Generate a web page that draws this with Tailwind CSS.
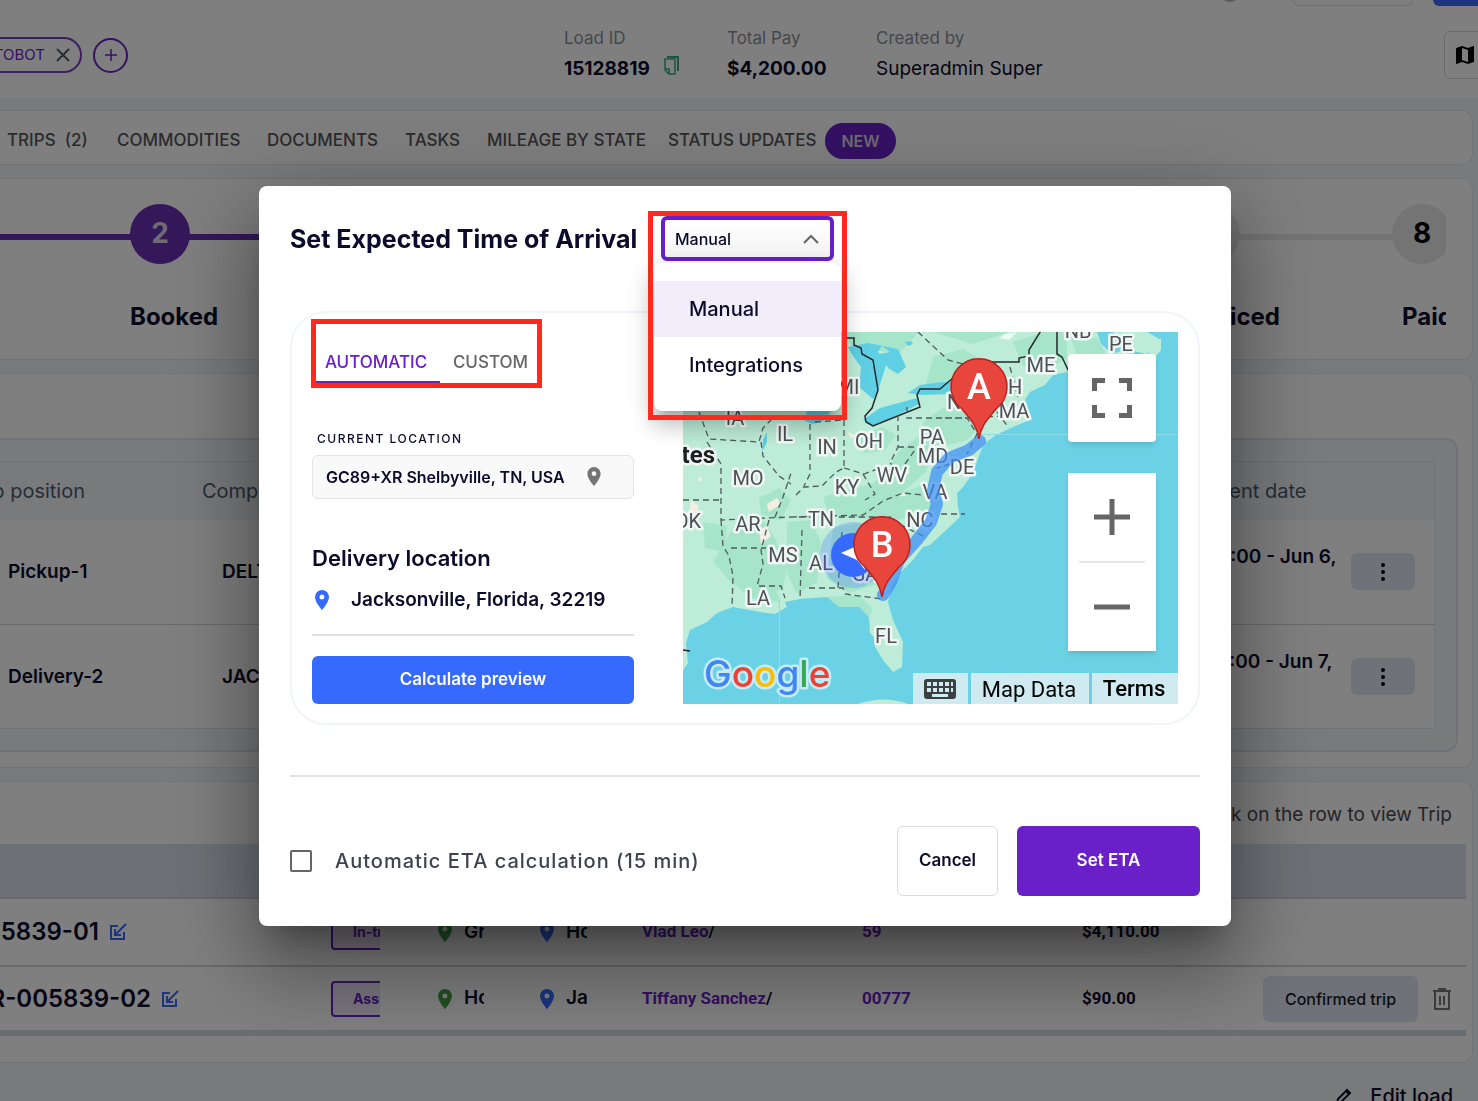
<!DOCTYPE html>
<html lang="en">
<head>
  <meta charset="UTF-8">
  <meta name="viewport" content="width=device-width, initial-scale=1.0">
  <script src="https://cdn.jsdelivr.net/npm/@tailwindcss/browser@4"></script>
  <title>Load 15128819</title>
</head>
<body class="font-['Inter','Liberation_Sans',sans-serif] text-[#0b0b2b]">

  <!-- shared icon shapes -->
  <svg class="hidden">
    <symbol id="pin" viewBox="0 0 14 20">
      <path fill="currentColor" fill-rule="evenodd" d="M7 0a7 7 0 0 0-7 7c0 5.200 7 13 7 13s7-7.800 7-13a7 7 0 0 0-7-7zm0 9.500a2.500 2.500 0 1 1 0-5 2.500 2.500 0 0 1 0 5z"/>
    </symbol>
    <symbol id="edit" viewBox="0 0 18 18">
      <path fill="none" stroke="currentColor" stroke-width="2" d="M9 3H2v13h13V9M17 1 7 11M6 6v6h6"/>
    </symbol>
    <symbol id="dots" viewBox="0 0 4 20">
      <g fill="currentColor"><circle cx="2" cy="3" r="2"/><circle cx="2" cy="10" r="2"/><circle cx="2" cy="17" r="2"/></g>
    </symbol>
  </svg>

  <div class="h-screen overflow-hidden bg-[#f1f5f9]">

    <header class="relative flex h-[98px] items-start bg-white">
      <div class="mt-[37px] flex w-[564px] shrink-0 items-center gap-[11px]">
        <div class="flex w-[82px] justify-end overflow-hidden">
          <span class="flex h-9 shrink-0 items-center gap-[11px] rounded-full border-2 border-[#7a3fc4] pr-[10px] pl-4 text-[15px] text-[#6a20c8]">
            ROTOBOT
            <svg class="size-[14px]" viewBox="0 0 14 14" fill="none" stroke="#555c66" stroke-width="2"><path d="M1 1l12 12M13 1 1 13"/></svg>
          </span>
        </div>
        <button type="button" aria-label="Add tag" class="flex size-[35px] items-center justify-center rounded-full border-2 border-[#6a20c8] text-[#6a20c8]">
          <svg class="size-3" viewBox="0 0 12 12" stroke="currentColor" stroke-width="1.500"><path d="M6 0v12M0 6h12"/></svg>
        </button>
      </div>
      <dl class="mt-[25px] flex text-[19px] leading-[26px]">
        <div class="w-[163px]">
          <dt class="text-[17px] leading-[26px] text-[#8a8f98]">Load ID</dt>
          <dd class="mt-[5px] flex gap-[14px] font-bold">15128819
            <svg class="h-[19px] w-[15px]" viewBox="0 0 15 19" fill="none" stroke="#2fae85"><path stroke-width="1.500" d="M1 3h10v15H5l-4-4V3zM1 13h4v5"/><path stroke-width="2" d="M3 1h11v14"/></svg>
          </dd>
        </div>
        <div class="w-[149px]">
          <dt class="text-[17px] leading-[26px] text-[#8a8f98]">Total Pay</dt>
          <dd class="mt-[5px] font-bold">$4,200.00</dd>
        </div>
        <div>
          <dt class="text-[17px] leading-[26px] text-[#8a8f98]">Created by</dt>
          <dd class="mt-[5px]">Superadmin Super</dd>
        </div>
      </dl>
      <div class="absolute top-0 right-0 flex">
        <span class="-mt-5 mr-[52px] size-[22px] rounded-full bg-[#b9b9b9]"></span>
        <span class="mr-5 h-[6px] w-[120px] rounded-b-md border border-t-0 border-[#dcdcdc]"></span>
        <span class="h-[6px] w-[45px] rounded-bl-md bg-[#366aff]"></span>
      </div>
      <button type="button" aria-label="Map" class="mt-[31px] -mr-2 ml-auto flex h-12 w-[42px] items-center justify-center rounded-md border border-[#d3d3d9] text-black">
        <svg class="size-6" viewBox="0 0 24 24" fill="currentColor"><path d="M20.500 3l-.160.030L15 5.100 9 3 3.360 4.900c-.210.070-.360.250-.360.480V20.500c0 .280.220.500.500.500l.160-.030L9 18.900l6 2.100 5.640-1.900c.210-.070.360-.250.360-.480V3.500c0-.280-.220-.500-.500-.500zM15 19l-6-2.110V5l6 2.110V19z"/></svg>
      </button>
    </header>

    <main class="mt-3 mr-[5px] flex flex-col gap-[13px]">

      <nav class="grid h-[55px] grid-cols-[110px_150px_138px_82px_181px_157px_71px] items-center rounded-r-xl border border-l-0 border-[#e4e8ec] bg-white pt-[6px] pl-[7px] text-[17px] font-medium whitespace-nowrap text-[#56565a]">
        <a href="#">TRIPS&nbsp; (2)</a>
        <a href="#">COMMODITIES</a>
        <a href="#">DOCUMENTS</a>
        <a href="#">TASKS</a>
        <a href="#">MILEAGE BY STATE</a>
        <a href="#">STATUS UPDATES</a>
        <span class="flex h-9 items-center justify-center rounded-full bg-[#6a20c8] text-base font-semibold text-[#d9d3e6]">NEW</span>
      </nav>

      <section class="rounded-r-xl border border-l-0 border-[#e4e8ec] bg-white pt-[25px] pb-[26px]">
        <ol class="mr-[26px] -ml-20 flex overflow-hidden text-2xl font-bold">
          <li class="relative w-[210px] shrink-0">
            <span class="absolute top-[30px] left-0 h-[6px] w-full bg-[#6a30b4]"></span>
            <span class="relative flex size-15 items-center justify-center rounded-full bg-[#6a30b4] text-[28px] text-[#dcd6e6]">1</span>
            <p class="mt-[37px] leading-8">Open</p>
          </li>
          <li class="relative w-[210px] shrink-0">
            <span class="absolute top-[30px] left-0 h-[6px] w-full bg-[#6a30b4]"></span>
            <span class="relative flex size-15 items-center justify-center rounded-full bg-[#6a30b4] text-[28px] text-[#dcd6e6]">2</span>
            <p class="mt-[37px] leading-8">Booked</p>
          </li>
          <li class="relative w-[210px] shrink-0">
            <span class="absolute top-[30px] left-0 h-[6px] w-full bg-[#e9e9e9]"></span>
            <span class="relative flex size-15 items-center justify-center rounded-full bg-[#e9e9e9] text-[28px] text-black">3</span>
            <p class="mt-[37px] leading-8">Assigned</p>
          </li>
          <li class="relative w-[210px] shrink-0">
            <span class="absolute top-[30px] left-0 h-[6px] w-full bg-[#e9e9e9]"></span>
            <span class="relative flex size-15 items-center justify-center rounded-full bg-[#e9e9e9] text-[28px] text-black">4</span>
            <p class="mt-[37px] leading-8">In-transit</p>
          </li>
          <li class="relative w-[210px] shrink-0">
            <span class="absolute top-[30px] left-0 h-[6px] w-full bg-[#e9e9e9]"></span>
            <span class="relative flex size-15 items-center justify-center rounded-full bg-[#e9e9e9] text-[28px] text-black">5</span>
            <p class="mt-[37px] leading-8">Delivered</p>
          </li>
          <li class="relative w-[210px] shrink-0">
            <span class="absolute top-[30px] left-0 h-[6px] w-full bg-[#e9e9e9]"></span>
            <span class="relative flex size-15 items-center justify-center rounded-full bg-[#e9e9e9] text-[28px] text-black">6</span>
            <p class="mt-[37px] leading-8">Billing</p>
          </li>
          <li class="relative w-[212px] shrink-0">
            <span class="absolute top-[30px] left-0 h-[6px] w-full bg-[#e9e9e9]"></span>
            <span class="relative flex size-15 items-center justify-center rounded-full bg-[#e9e9e9] text-[28px] text-black">7</span>
            <p class="mt-[37px] leading-8">Invoiced</p>
          </li>
          <li class="relative w-[210px] shrink-0">
            <span class="relative flex size-15 items-center justify-center rounded-full bg-[#e9e9e9] text-[28px] text-black">8</span>
            <p class="mt-[37px] ml-[10px] leading-8">Paid</p>
          </li>
        </ol>
      </section>

      <section class="rounded-r-xl border border-l-0 border-[#e4e8ec] bg-white pt-16 pr-[14px] pb-[15px]">
        <div class="rounded-r-xl border-2 border-l-0 border-[#dfe4ee] bg-[#f1f5f9] py-[21px] pr-[21px]">
          <table class="w-full table-fixed border-collapse border border-l-0 border-[#e0e2e6] bg-white text-left whitespace-nowrap">
            <colgroup><col class="w-[182px]"><col class="w-[182px]"><col><col class="w-[196px]"><col class="w-[90px]"></colgroup>
            <thead>
              <tr class="h-[58px] bg-[#f1f5f9] text-xl font-normal text-[#4d5c6e]">
                <th class="font-normal"><div class="flex w-[85px] justify-end overflow-hidden">Stop position</div></th>
                <th class="pl-5 font-normal">Company</th>
                <th class="font-normal">Address</th>
                <th class="pr-[38px] font-normal"><div class="flex justify-end">Appointment date</div></th>
                <th></th>
              </tr>
            </thead>
            <tbody class="text-[19px] leading-[30px] font-semibold">
              <tr class="h-[105px] border-b border-[#d4d4d4]">
                <td class="pl-2">Pickup-1</td>
                <td class="pl-10">DELTA</td>
                <td></td>
                <td><div class="flex w-[188px] flex-col"><span class="self-end">10:00 - Jun 6,</span><span>2023</span></div></td>
                <td class="pl-[6px]"><button type="button" aria-label="Pickup-1 actions" class="flex h-[37px] w-16 items-center justify-center rounded-md bg-[#dfe7f2] text-black"><svg class="h-5 w-1"><use href="#dots"/></svg></button></td>
              </tr>
              <tr class="h-[104px]">
                <td class="pl-2">Delivery-2</td>
                <td class="pl-10">JACKSON</td>
                <td></td>
                <td><div class="flex w-[184px] flex-col"><span class="self-end">10:00 - Jun 7,</span><span>2023</span></div></td>
                <td class="pl-[6px]"><button type="button" aria-label="Delivery-2 actions" class="flex h-[37px] w-16 items-center justify-center rounded-md bg-[#dfe7f2] text-black"><svg class="h-5 w-1"><use href="#dots"/></svg></button></td>
              </tr>
            </tbody>
          </table>
        </div>
      </section>

      <section class="rounded-r-xl border border-l-0 border-[#e4e8ec] bg-white pr-[6px] pb-[26px]">
        <p class="flex h-[62px] items-center justify-end pt-[5px] pr-[14px] text-[19px] text-[#4a4a50]">Click on the row to view Trip</p>
        <table class="w-full table-fixed border-collapse border-b-6 border-[#d3d8e0] text-left whitespace-nowrap">
          <colgroup><col class="w-[331px]"><col class="w-[107px]"><col class="w-[102px]"><col class="w-[102px]"><col class="w-[220px]"><col class="w-[220px]"><col class="w-[181px]"><col></colgroup>
          <thead>
            <tr class="h-[54px] border-b-2 border-[#d3d3d3] bg-[#dbe3ee]"><th></th><th></th><th></th><th></th><th></th><th></th><th></th><th></th></tr>
          </thead>
          <tbody class="font-['Roboto',sans-serif] text-[17px] font-bold">
            <tr class="h-[68px] border-b-2 border-[#d3d3d3]">
              <td class="font-['Inter',sans-serif] text-2xl font-semibold">
                <div class="flex items-center gap-[10px]"><span class="flex w-[99px] justify-end overflow-hidden">TR-005839-01</span><svg class="size-[18px] text-[#366aff]"><use href="#edit"/></svg></div>
              </td>
              <td><div class="w-[49px] overflow-hidden"><span class="flex h-9 w-20 items-center rounded-sm border-2 border-[#6a20c8] bg-[#f2edfb] pl-5 font-['Inter',sans-serif] text-sm text-[#6a20c8]">In-transit</span></div></td>
              <td><div class="flex w-[46px] items-center gap-3 overflow-hidden font-['Inter',sans-serif] text-[19px] font-semibold"><svg class="h-5 w-[14px] shrink-0 text-[#44a047]"><use href="#pin"/></svg>Greer</div></td>
              <td><div class="flex w-[47px] items-center gap-3 overflow-hidden font-['Inter',sans-serif] text-[19px] font-semibold"><svg class="h-5 w-[14px] shrink-0 text-[#366aff]"><use href="#pin"/></svg>Houston</div></td>
              <td><a href="#" class="text-[#6a20c8]">Vlad Leo</a>/</td>
              <td><a href="#" class="text-[#6a20c8]">59</a></td>
              <td>$4,110.00</td>
              <td></td>
            </tr>
            <tr class="h-[67px]">
              <td class="font-['Inter',sans-serif] text-2xl font-semibold">
                <div class="flex items-center gap-[10px]"><span class="flex w-[151px] justify-end overflow-hidden">TR-005839-02</span><svg class="size-[18px] text-[#366aff]"><use href="#edit"/></svg></div>
              </td>
              <td><div class="w-[49px] overflow-hidden"><span class="flex h-9 w-20 items-center rounded-sm border-2 border-[#6a20c8] bg-[#f2edfb] pl-5 font-['Inter',sans-serif] text-sm text-[#6a20c8]">Assigned</span></div></td>
              <td><div class="flex w-[46px] items-center gap-3 overflow-hidden font-['Inter',sans-serif] text-[19px] font-semibold"><svg class="h-5 w-[14px] shrink-0 text-[#44a047]"><use href="#pin"/></svg>Houston</div></td>
              <td><div class="flex w-[47px] items-center gap-3 overflow-hidden font-['Inter',sans-serif] text-[19px] font-semibold"><svg class="h-5 w-[14px] shrink-0 text-[#366aff]"><use href="#pin"/></svg>Jacksonville</div></td>
              <td><a href="#" class="text-[#6a20c8]">Tiffany Sanchez</a>/</td>
              <td><a href="#" class="text-[#6a20c8]">00777</a></td>
              <td>$90.00</td>
              <td>
                <div class="flex items-center gap-[14px]">
                  <button type="button" class="h-[46px] w-[155px] rounded-md bg-[#dfe7f2] font-['Inter',sans-serif] text-base font-medium text-[#17171f]">Confirmed trip</button>
                  <button type="button" aria-label="Delete trip">
                    <svg class="h-[22px] w-5" viewBox="0 0 20 22" fill="none" stroke="#77777c" stroke-width="2"><path d="M3 4v17h14V4M1 3h18M6 1h8M8 8v9M12 8v9"/></svg>
                  </button>
                </div>
              </td>
            </tr>
          </tbody>
        </table>
      </section>

      <button type="button" class="mt-[6px] mr-5 flex items-center gap-[18px] self-end text-xl font-medium">
        <svg class="size-4" viewBox="0 0 16 16" fill="none" stroke="currentColor" stroke-width="2"><path d="M1 15l1-4L11 2l3 3-9 9zM10 3l3 3"/></svg>
        Edit load
      </button>
    </main>
  </div>

  <div class="fixed inset-0 flex items-center justify-center bg-black/50 pt-[11px] pl-3">
    <div role="dialog" aria-labelledby="etaTitle" class="w-full max-w-[972px] rounded-lg bg-white px-[31px] pt-[30px] pb-[30px] shadow-[0_22px_30px_-14px_rgba(0,0,0,0.3),0_48px_76px_6px_rgba(0,0,0,0.22),0_18px_92px_16px_rgba(0,0,0,0.2)]">

      <div class="flex items-center gap-[30px]">
        <h2 id="etaTitle" class="w-[341px] pt-[2px] text-[25px] font-bold whitespace-nowrap">Set Expected Time of Arrival</h2>
        <div class="relative">
          <select aria-label="Mode" class="block h-[45px] w-[173px] appearance-none rounded-md border-4 border-[#6a20c8] bg-linear-to-b from-white to-[#f5f5f5] px-[10px] text-base font-medium outline-none">
            <option>Manual</option>
            <option>Integrations</option>
          </select>
          <svg class="pointer-events-none absolute top-[18px] right-[15px] h-[10px] w-4" viewBox="0 0 16 10" fill="none" stroke="#666" stroke-width="2"><path d="M1 9l7-7 7 7"/></svg>
          <ul class="absolute top-[47px] -left-[7px] z-10 w-[187px] rounded-lg bg-white pt-[18px] pb-[18px] text-xl font-medium shadow-[0_10px_10px_-6px_rgba(0,0,0,0.2),0_16px_20px_2px_rgba(0,0,0,0.14),0_6px_28px_4px_rgba(0,0,0,0.12)]">
            <li><button type="button" class="block h-14 w-full bg-[#f2edfb] px-[35px] text-left">Manual</button></li>
            <li><button type="button" class="block h-14 w-full px-[35px] text-left">Integrations</button></li>
          </ul>
          <div class="pointer-events-none absolute -top-[5px] -left-[13px] z-20 h-[209px] w-[199px] border-5 border-[#ff2a1d]"></div>
        </div>
      </div>

      <div class="mt-[50px] flex gap-[49px] rounded-[36px] border-2 border-[#f1f5f9] py-[19px] pr-5 pl-5">
        <div class="w-[322px] shrink-0">
          <div class="-mt-[13px] -ml-px flex h-[69px] w-[231px] border-5 border-[#ff2a1d] pt-4 text-[17px] font-medium">
            <button type="button" class="w-[124px] shrink-0 border-b-2 border-[#6a20c8] pr-1 pt-1 text-[#6a20c8]">AUTOMATIC</button>
            <button type="button" class="flex-1 pt-1 pb-[2px] pl-1 text-[#666]">CUSTOM</button>
          </div>
          <label for="currentLocation" class="mt-[43px] block pl-[5px] text-xs leading-4 font-medium tracking-[1.500px]">CURRENT LOCATION</label>
          <div class="relative mt-2">
            <input id="currentLocation" type="text" value="GC89+XR Shelbyville, TN, USA" class="block h-11 w-full rounded-md border border-[#e4e4e8] bg-[#f9f9fa] pl-[13px] text-base font-semibold outline-none">
            <svg class="absolute top-3 left-[275px] h-[19px] w-[14px] text-[#757575]"><use href="#pin"/></svg>
          </div>
          <h3 class="mt-11 text-[22px] leading-[30px] font-semibold">Delivery location</h3>
          <p class="mt-3 flex items-center gap-[22px] pl-[3px] text-[19px] leading-[30px] font-semibold">
            <svg class="h-5 w-[14px] text-[#366aff]"><use href="#pin"/></svg>
            Jacksonville, Florida, 32219
          </p>
          <hr class="mt-[19px] border-t-2 border-[#e0e0e0]">
          <button type="button" class="mt-5 block h-12 w-full rounded-md bg-[#366aff] text-[17px] font-semibold text-white">Calculate preview</button>
        </div>

        <div class="relative h-[372px] flex-1 overflow-hidden bg-[#6bd2e6]">
          <svg class="block h-[372px] w-[495px]" viewBox="0 0 495 372">
            <!-- land -->
            <path fill="#bdecd8" d="M0 0H414L418 12 430 22 440 18 452 30 446 34 432 38 410 38 384 40 370 43 362 53 347 60 342 68 347 88 330 95 313 103 302 111 297 121 290 141 280 155 274 161 275 175 277 185 260 201 247 213 240 215 230 228 217 241 209 253 205 270 210 288 220 310 219 335 210 340 200 328 192 315 192 306 187 301 186 285 177 275 157 275 144 265 117 267 102 270 104 275 92 282 77 280 50 275 34 281 24 290 7 298 3 311 5 331 0 338Z"/>
            <path fill="#bdecd8" d="M430 0h34l14 8-14 14-18-4zM466 16l12-10v12l-12 14zM175 372q26-9 50 0z"/>
            <path fill="#a6e5ca" d="M160 0h90l40 12 36-12h-90l-20 22-24-4-10 16zM250 25l30-8 20 12-8 20-30 10-20-4zM330 10l30-10h24v26l-24 14-20-6zM388 6h26l8 14-10 16-18-12zM240 90l20-14 30-6 14 18-20 20-40 10zM215 120l22-16 16 6-10 30-30 26-30-8 22-20zM175 105l24-10 14 8-12 16-20 2zM140 165l50-14 30 10 30-12 10 14-14 20-40 6-60-6zM150 195l40-6 20 14-10 24 6 22-40 12-22-14zM104 190l24-2 10 22-4 40-20 12-10-20zM48 200l34-10 12 20-10 30 14 30-30-4-20-16-18-20zM76 166l20-10 12 12-10 20-20-6zM20 190l24 4-2 26-20-4zM130 75l20-4-4 14-20 6zM150 8l16-8h-6z"/>
            <path fill="#a6e5ca" d="M144 265l32-2 14 14-4 8-10-10-20 0zM88 206l18 18-6 34-16 2-8-24z"/>
            <g fill="#f3eee2"><path d="M8 168l8 6-4 14-6-8zM84 172l10-6 4 6-12 8zM76 198l8-4 4 10-10 8zM164 100l10 4-6 2zM14 148l4-4 1 6zM216 164l5-4 2 4z"/></g>
            <g fill="#eefaf4"><path d="M322 2l12-2-8 8-10-2zM220 140l5-6 1 8zM274 136l6-4-2 8z"/></g>
            <!-- lakes -->
            <g fill="#5fcfe4">
              <path d="M165 15l20-4 30 6 8 18-8 7-10-6-8-14 10-2-8-6-4 6 9 10-10 32-4 5-14-12 2-20-10-14z"/>
              <path d="M180 88l17-12 37-10 2 6-27 14-20 8z"/>
              <path d="M225 61l12-8 22-3h25l-16 12-30 1z"/>
              <path d="M124 78h24l-6 10-12 4-8-3zM80 108l4-8v10l-5 10zM82 270h8l-4 6zM222 10l6-1 2 3-5 2z"/>
            </g>
            <!-- country border -->
            <path fill="none" stroke="#23292c" stroke-width="1.500" d="M164 6h7v7l7 3 1 6 11 6 5 30-6 18-7 8 1 6 7 4 47-19-3-12 3-6h20l14-12 28-15h37v-4l10-2v-6l13-21M374 0v22l5 3 7 15M0 318l7 1"/>
            <!-- state lines -->
            <g fill="none" stroke="#4f5a5c" stroke-width="1.300" stroke-dasharray="6 4">
              <path d="M16 80l10 27 50 3 4-14 8-8M24 110l14 22v56l70-3h100M0 168h38M38 188l2 26 6 10 4 20-1 30M48 216h35M78 110l2 14 16 20 12 8M127 92v50l-6 12M132 90l28-2 4-2M161 88v48l-8 4-14 14-18 1-10 10M161 136l20 6 16-6M92 185l8-20 8-24M215 83v32l-8 16 8 8M224 75v11h60M215 115h20M119 198l-2 70M159 200l-4 56M126 256h34l2 6 37 5M86 188l-8 30 2 14-6 22h24l4 12M108 185l72-2 20-14 20-8 40 4M180 142l12 20-10 6M222 132l10-14M235 0l30 28 22 6M262 86h22l10 16-10 20M284 86l36-2M310 50l4 30 12 16M286 126l-32 10M258 182h24M208 188l36 18M327 35l8 30"/>
            </g>
            <path stroke="#8fdbe9" d="M297 102.500h198M96.500 268v104"/>
            <!-- labels -->
            <g class="font-['Roboto',sans-serif]" font-size="20" fill="#4c5256" stroke="#f0f7f4" stroke-width="5" stroke-linejoin="round" paint-order="stroke" text-anchor="middle">
              <text x="52" y="93">IA</text>
              <text x="102" y="109">IL</text>
              <text x="144" y="122">IN</text>
              <text x="186" y="116">OH</text>
              <text x="249" y="112">PA</text>
              <text x="250" y="131">MD</text>
              <text x="279" y="142">DE</text>
              <text x="165" y="62">MI</text>
              <text x="358" y="40">ME</text>
              <text x="438" y="19">PE</text>
              <text x="395" y="6">NB</text>
              <text x="325" y="62">NH</text>
              <text x="331" y="86">MA</text>
              <text x="277" y="77">NY</text>
              <text x="65" y="153">MO</text>
              <text x="164" y="162">KY</text>
              <text x="209" y="150">WV</text>
              <text x="252" y="167">VA</text>
              <text x="237" y="195">NC</text>
              <text x="138" y="194">TN</text>
              <text x="65" y="199">AR</text>
              <text x="5" y="196">OK</text>
              <text x="100" y="230">MS</text>
              <text x="138" y="238">AL</text>
              <text x="182" y="249">GA</text>
              <text x="75" y="273">LA</text>
              <text x="203" y="311">FL</text>
              <text x="32" y="131" font-size="24" font-weight="700" fill="#1d1f20" text-anchor="end">States</text>
            </g>
            <!-- route -->
            <path fill="none" stroke="#3b8df5" stroke-opacity="0.720" stroke-width="12" stroke-linecap="round" stroke-linejoin="round" d="M297 109 286 118 266 126 254 140 250 158 254 172 248 190 234 208 216 228 208 250 200 263"/>
            <circle cx="170" cy="223" r="33" fill="#366aff" fill-opacity="0.250"/>
            <circle cx="170" cy="223" r="22" fill="#366aff"/>
            <path fill="#fff" d="M158 221 176 213 182 238 174 228z"/>
            <g fill="#e8453c" stroke="#b8221f" stroke-width="1.500">
              <path d="M296 107c-2-14-9-20-17-30a28 28 0 1 1 34 0c-8 10-15 16-17 30z"/>
              <path d="M199 265c-2-14-9-20-17-30a28 28 0 1 1 34 0c-8 10-15 16-17 30z"/>
            </g>
            <g class="font-['Roboto',sans-serif]" font-size="36" font-weight="500" fill="#fff" text-anchor="middle">
              <text x="296" y="67">A</text>
              <text x="199" y="225">B</text>
            </g>
            <text x="21" y="355" font-size="37" font-weight="500" class="font-['Inter',sans-serif]" stroke="#c5ecf5" stroke-width="5" stroke-linejoin="round" paint-order="stroke"><tspan fill="#4285f4">G</tspan><tspan fill="#ea4335">o</tspan><tspan fill="#fbbc05">o</tspan><tspan fill="#4285f4">g</tspan><tspan fill="#34a853">l</tspan><tspan fill="#ea4335">e</tspan></text>
          </svg>

          <div class="absolute top-[22px] right-[22px] flex w-[88px] flex-col gap-[31px]">
            <button type="button" aria-label="Toggle fullscreen" class="flex h-[88px] items-center justify-center rounded-sm bg-white shadow-md">
              <svg class="size-10" viewBox="0 0 40 40" fill="none" stroke="#666" stroke-width="5"><path d="M2.500 13V2.500H13M27 2.500h10.500V13M37.500 27v10.500H27M13 37.500H2.500V27"/></svg>
            </button>
            <div class="flex flex-col items-center bg-white shadow-md">
              <button type="button" aria-label="Zoom in" class="flex h-22 w-full items-center justify-center">
                <svg class="size-9" viewBox="0 0 36 36" stroke="#666" stroke-width="5"><path d="M18 0v36M0 18h36"/></svg>
              </button>
              <span class="h-[2px] w-[66px] bg-[#e6e6e6]"></span>
              <button type="button" aria-label="Zoom out" class="flex h-22 w-full items-center justify-center">
                <svg class="size-9" viewBox="0 0 36 36" stroke="#666" stroke-width="5"><path d="M0 18h36"/></svg>
              </button>
            </div>
          </div>

          <div class="absolute right-0 bottom-0 flex h-[31px] gap-[3px] font-['Roboto',sans-serif] text-[22px] text-black">
            <button type="button" aria-label="Keyboard shortcuts" class="flex w-[55px] items-center justify-center bg-[#cfeaf0] pr-[2px]">
              <svg class="h-5 w-8" viewBox="0 0 32 20"><rect width="32" height="20" rx="3" fill="#3c4043"/><path stroke="#cfeaf0" stroke-width="4" stroke-dasharray="4 2" d="M3 5h26M3 11h26"/><path stroke="#cfeaf0" stroke-width="3" d="M8 16.500h16"/></svg>
            </button>
            <button type="button" class="w-[118px] bg-[#cfeaf0] pr-[2px]">Map Data</button>
            <a href="#" class="flex w-[86px] items-center justify-center bg-[#cfeaf0] pr-[2px] font-medium">Terms</a>
          </div>
        </div>
      </div>

      <hr class="mt-[50px] border-t-2 border-[#e0e0e0]">

      <div class="mt-[49px] flex items-center">
        <input id="autoEta" type="checkbox" class="size-[22px] appearance-none rounded-xs border-2 border-[#666]">
        <label for="autoEta" class="ml-[23px] text-xl font-medium tracking-[1px] text-[#3f4350]">Automatic ETA calculation (15 min)</label>
        <button type="button" class="ml-auto h-[70px] w-[101px] rounded-md border border-[#dcdce0] text-[17px] font-semibold">Cancel</button>
        <button type="button" class="ml-[19px] h-[70px] w-[183px] rounded-md bg-[#6a20c8] text-[17px] font-semibold text-white">Set ETA</button>
      </div>
    </div>
  </div>
</body>
</html>
